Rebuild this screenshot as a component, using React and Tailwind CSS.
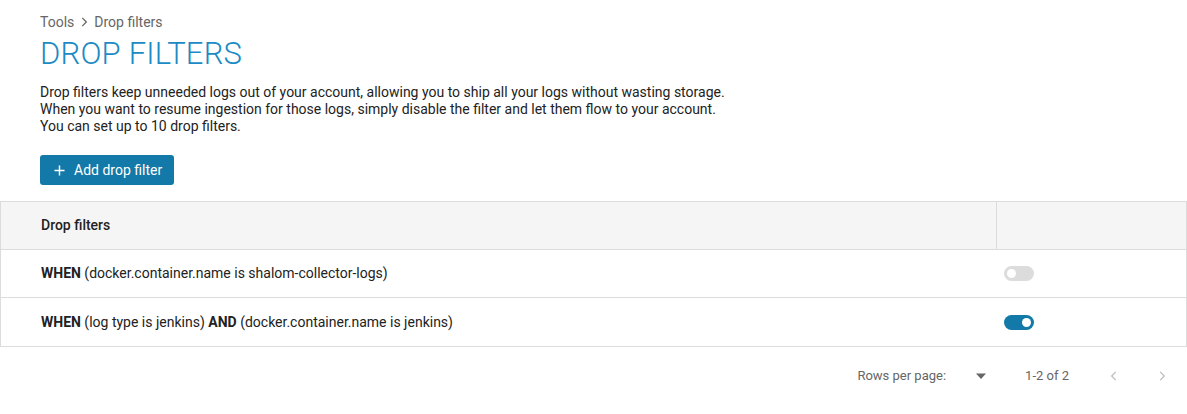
import React, { useState } from 'react';

function Toggle({ on, onChange }) {
  return (
    <button
      onClick={onChange}
      className={`relative w-[30px] h-[15px] rounded-full ${on ? 'bg-[#1379a8]' : 'bg-[#dcdcdc]'}`}
    >
      <span
        className={`absolute top-[3px] w-[9px] h-[9px] rounded-full bg-white ${on ? 'left-[18px]' : 'left-[3px]'}`}
      />
    </button>
  );
}

export default function App() {
  const [filters, setFilters] = useState([
    { id: 1, on: false, parts: [['WHEN', ' (docker.container.name is shalom-collector-logs)']] },
    { id: 2, on: true, parts: [['WHEN', ' (log type is jenkins) '], ['AND', ' (docker.container.name is jenkins)']] },
  ]);

  const toggle = (id) => setFilters(prev => prev.map(f => f.id === id ? { ...f, on: !f.on } : f));

  return (
    <div className="w-[1187px] h-[414px] bg-white font-['Roboto',sans-serif] text-[#222]">
      <div className="px-10 pt-[12px]">
        {/* Breadcrumb */}
        <div className="flex items-center gap-[3px] text-[14px] leading-5 text-[#666]">
          <span>Tools</span>
          <svg className="w-[14px] h-[14px]" viewBox="0 0 24 24" fill="none" stroke="currentColor" strokeWidth="2.2">
            <path d="M9 5l7 7-7 7" />
          </svg>
          <span>Drop filters</span>
        </div>
        <h1 className="mt-[3px] text-[31px] leading-[38px] font-light text-[#1c8ac4] tracking-[0.2px]">DROP FILTERS</h1>
        <div className="mt-[11px] text-[14px] leading-[17px]">
          <p>Drop filters keep unneeded logs out of your account, allowing you to ship all your logs without wasting storage.</p>
          <p>When you want to resume ingestion for those logs, simply disable the filter and let them flow to your account.</p>
          <p>You can set up to 10 drop filters.</p>
        </div>
        <button className="mt-[20px] h-[30px] pl-[14px] pr-[12px] flex items-center gap-[9px] rounded-[3px] bg-[#1379a8] text-white text-[14px]">
          <svg className="w-[11px] h-[11px]" viewBox="0 0 12 12" fill="none" stroke="currentColor" strokeWidth="1.6">
            <path d="M6 0.5v11M0.5 6h11" />
          </svg>
          <span>Add drop filter</span>
        </button>
      </div>

      {/* Table */}
      <div className="mt-[16px] border border-[#dcdcdc]">
        <div className="flex h-[48px] bg-[#f5f5f5] border-b border-[#dcdcdc]">
          <div className="flex-1 flex items-center pl-10 text-[14px] font-medium">Drop filters</div>
          <div className="w-[190px] border-l border-[#dcdcdc]" />
        </div>
        {filters.map((f, i) => (
          <div key={f.id} className={`flex h-[48px] ${i < filters.length - 1 ? 'border-b border-[#dcdcdc]' : ''}`}>
            <div className="flex-1 flex items-center pl-10 text-[14px] whitespace-pre">
              {f.parts.map(([kw, rest]) => (
                <React.Fragment key={kw}>
                  <span className="font-bold">{kw}</span>
                  <span>{rest}</span>
                </React.Fragment>
              ))}
            </div>
            <div className="w-[190px] flex items-center pl-[8px]">
              <Toggle on={f.on} onChange={() => toggle(f.id)} />
            </div>
          </div>
        ))}
      </div>

      {/* Pagination */}
      <div className="flex items-center justify-end h-[58px] text-[13px] text-[#666] pr-[18px]">
        <span>Rows per page:</span>
        <svg className="ml-[29px] w-[12px] h-[7px]" viewBox="0 0 12 7" fill="#666">
          <path d="M1 0.5h10L6 6z" />
        </svg>
        <span className="ml-[38px]">1-2 of 2</span>
        <svg className="ml-[38px] w-[14px] h-[14px]" viewBox="0 0 24 24" fill="none" stroke="#bbb" strokeWidth="2">
          <path d="M15 5l-7 7 7 7" />
        </svg>
        <svg className="ml-[34px] w-[14px] h-[14px]" viewBox="0 0 24 24" fill="none" stroke="#bbb" strokeWidth="2">
          <path d="M9 5l7 7-7 7" />
        </svg>
      </div>
    </div>
  );
}
